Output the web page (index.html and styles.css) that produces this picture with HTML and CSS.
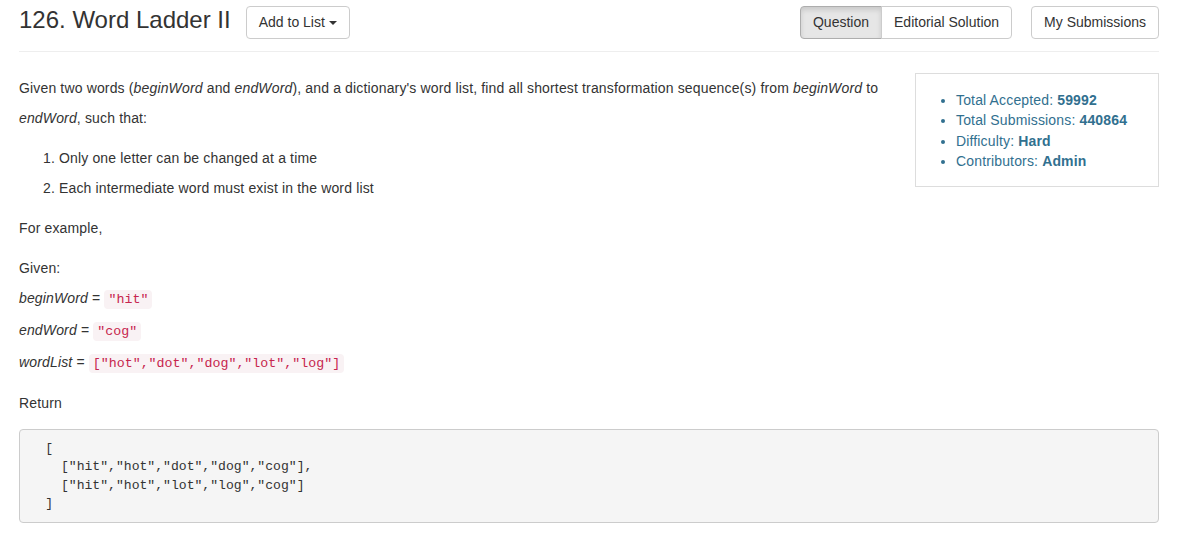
FILE: index.html
```html
<!DOCTYPE html>
<html>
<head>
<meta charset="utf-8">
<link rel="stylesheet" href="styles.css">
</head>
<body>
<div class="container">
  <div class="header">
    <h3 class="title">126. Word Ladder II</h3>
    <button class="btn add-btn">Add to List <span class="caret"></span></button>
    <div class="spacer"></div>
    <div class="btn-group">
      <button class="btn active">Question</button>
      <button class="btn">Editorial Solution</button>
    </div>
    <button class="btn subs">My Submissions</button>
  </div>
  <hr class="rule">
  <div class="main">
    <div class="question">
      <p class="lead-p">Given two words (<em>beginWord</em> and <em>endWord</em>), and a dictionary's word list, find all shortest transformation sequence(s) from <em>beginWord</em> to <em>endWord</em>, such that:</p>
      <ol class="rules">
        <li>Only one letter can be changed at a time</li>
        <li>Each intermediate word must exist in the word list</li>
      </ol>
      <p class="example">For example,</p>
      <p class="given">Given:<br>
      <span class="line"><em>beginWord</em> = <code>"hit"</code></span>
      <span class="line"><em>endWord</em> = <code>"cog"</code></span>
      <span class="line"><em>wordList</em> = <code>["hot","dot","dog","lot","log"]</code></span>
      </p>
      <p class="ret">Return</p>
    </div>
    <div class="side">
      <ul class="stats">
        <li>Total Accepted: <strong>59992</strong></li>
        <li>Total Submissions: <strong>440864</strong></li>
        <li>Difficulty: <strong>Hard</strong></li>
        <li>Contributors: <strong>Admin</strong></li>
      </ul>
    </div>
  </div>
  <pre class="result">  [
    ["hit","hot","dot","dog","cog"],
    ["hit","hot","lot","log","cog"]
  ]</pre>
</div>
</body>
</html>
```
FILE: styles.css
```css
* { box-sizing: border-box; }
html, body { margin: 0; padding: 0; }
body {
  font-family: "Liberation Sans", Arial, sans-serif;
  font-size: 14px;
  color: #333;
  background: #fff;
}
.container {
  width: 1170px;
  margin: 0 auto;
  padding: 0 15px;
}
.header {
  display: flex;
  align-items: center;
  height: 44px;
}
.title {
  font-size: 24px;
  font-weight: 400;
  margin: 0 15px 0 0;
  line-height: 1;
  position: relative;
  top: -2px;
}
.btn {
  font-family: inherit;
  font-size: 14px;
  color: #333;
  background: #fff;
  border: 1px solid #ccc;
  border-radius: 4px;
  height: 33px;
  padding: 0 12px;
  line-height: 31px;
  margin: 0;
}
.caret {
  display: inline-block;
  width: 0; height: 0;
  border-top: 4px solid #333;
  border-left: 4px solid transparent;
  border-right: 4px solid transparent;
  vertical-align: middle;
}
.spacer { flex: 1; }
.btn-group { display: flex; margin-right: 19px; }
.btn-group .btn:first-child { border-radius: 4px 0 0 4px; }
.btn-group .btn:last-child { border-radius: 0 4px 4px 0; margin-left: -1px; }
.btn.active {
  background: #e6e6e6;
  border-color: #adadad;
  box-shadow: inset 0 3px 5px rgba(0,0,0,.125);
}
.rule {
  border: 0;
  border-top: 1px solid #eee;
  margin: 7px 0 0 0;
}
.main {
  display: flex;
  justify-content: space-between;
}
.question { width: 872px; letter-spacing: 0.15px; }
p { margin: 0; }
.lead-p { line-height: 30px; margin-top: 21px; }
.rules { margin: 10px 0 0 0; padding-left: 40px; line-height: 30px; }
.example { margin-top: 10px; line-height: 30px; }
.given { margin-top: 10px; line-height: 30px; }
.line { display: block; height: 32px; line-height: 32px; position: relative; top: -1px; }
code {
  font-family: "Liberation Mono", "Courier New", monospace;
  font-size: 13.3px;
  letter-spacing: 0;
  color: #c7254e;
  background: #f9f2f4;
  border-radius: 4px;
  padding: 2px 4px;
}
.ret { margin-top: 9px; line-height: 30px; }
.side {
  width: 244px;
  margin-top: 21px;
  border: 1px solid #ddd;
  height: 114px;
  padding: 15.5px 0 0 0;
}
.stats {
  margin: 0;
  padding-left: 40px;
  color: #31708f;
  font-size: 14px;
  letter-spacing: 0.15px;
  line-height: 20.5px;
}
.stats li { list-style: disc; }
.stats strong { font-weight: 700; }
.result {
  margin: 11px 0 0 0;
  background: #f5f5f5;
  border: 1px solid #ccc;
  border-radius: 4px;
  padding: 9.5px;
  font-family: "Liberation Mono", "Courier New", monospace;
  font-size: 13.1px;
  line-height: 18.6px;
  color: #333;
  height: 94px;
}
```
